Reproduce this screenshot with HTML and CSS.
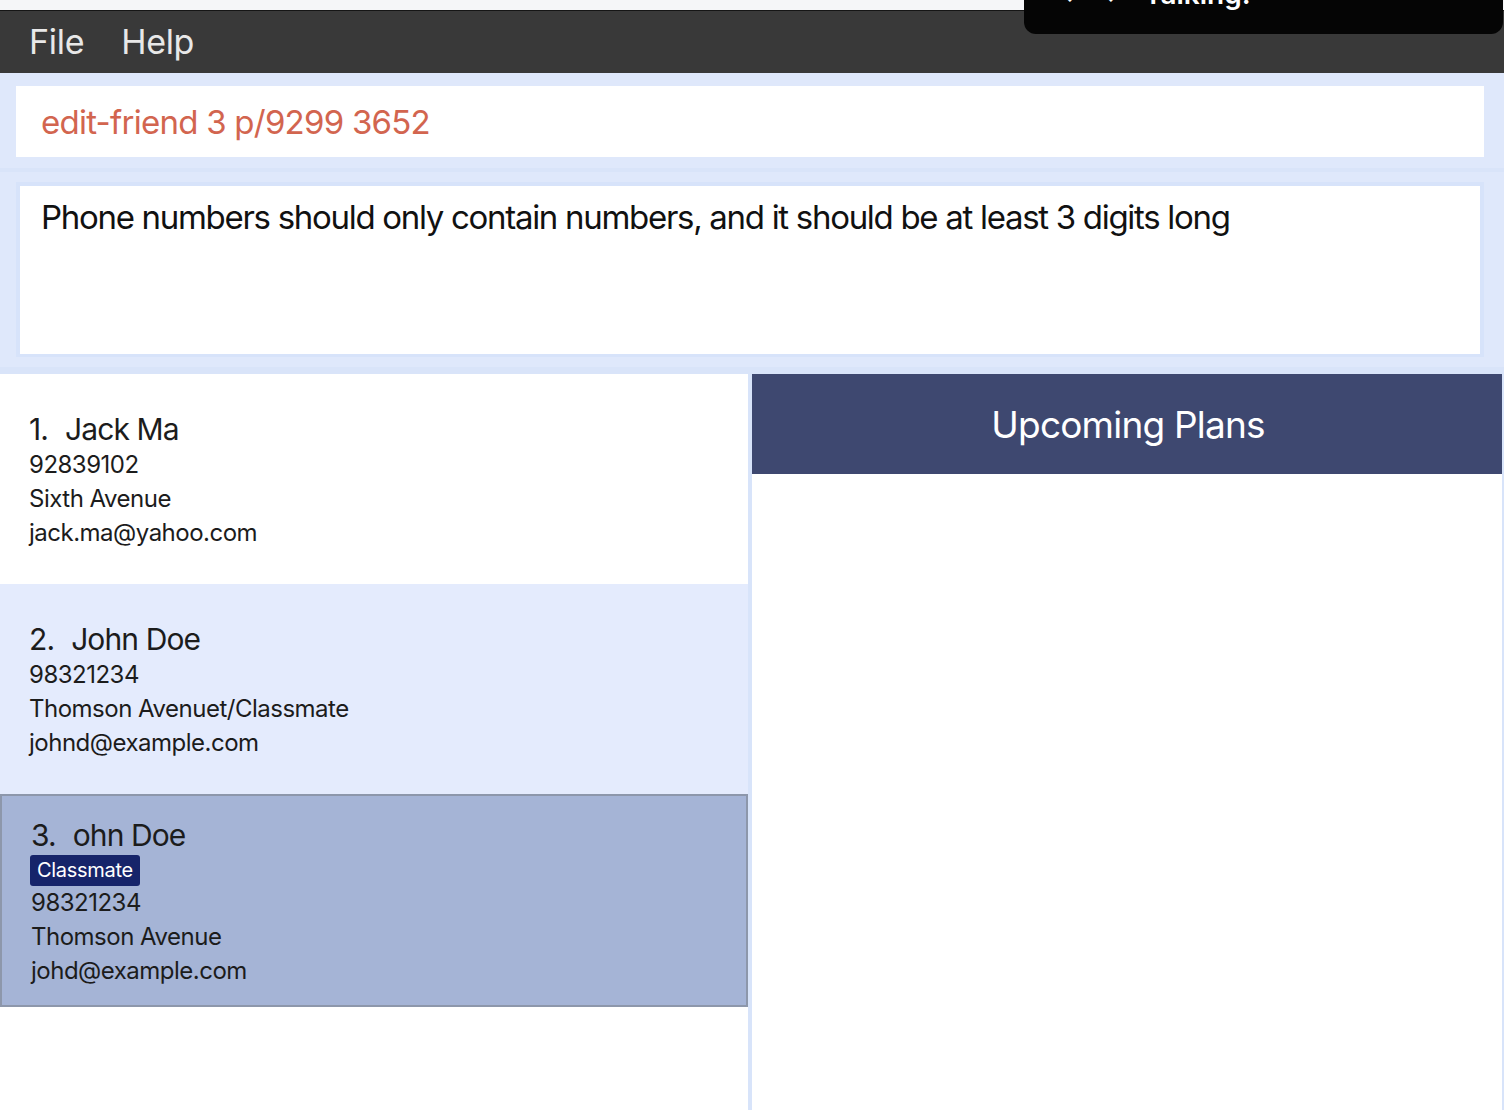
FILE: index.html
```html
<!DOCTYPE html>
<html>
<head>
<meta charset="utf-8">
<link rel="stylesheet" href="styles.css">
</head>
<body>
<div class="app">
  <div class="topstrip"></div>
  <div class="menubar">
    <span class="menu-item">File</span>
    <span class="menu-item">Help</span>
  </div>
  <div class="toast"><span class="toast-icons">&#10003; &#10003;</span><span class="toast-text">Talking:</span></div>
  <div class="upper">
    <div class="command-box">edit-friend 3 p/9299 3652</div>
    <div class="sep"></div>
    <div class="result-wrap">
      <div class="result-box">Phone numbers should only contain numbers, and it should be at least 3 digits long</div>
    </div>
    <div class="sep sep-bottom"></div>
  </div>
  <div class="panels">
    <div class="list">
      <div class="card">
        <div class="name"><span class="idx">1.</span>Jack Ma</div>
        <div class="line">92839102</div>
        <div class="line">Sixth Avenue</div>
        <div class="line">jack.ma@yahoo.com</div>
      </div>
      <div class="card card-alt">
        <div class="name"><span class="idx">2.</span>John Doe</div>
        <div class="line">98321234</div>
        <div class="line">Thomson Avenuet/Classmate</div>
        <div class="line">johnd@example.com</div>
      </div>
      <div class="card card-selected">
        <div class="name"><span class="idx">3.</span>ohn Doe</div>
        <div class="tags"><span class="tag">Classmate</span></div>
        <div class="line">98321234</div>
        <div class="line">Thomson Avenue</div>
        <div class="line">johd@example.com</div>
      </div>
    </div>
    <div class="divider"></div>
    <div class="plans">
      <div class="plans-header">Upcoming Plans</div>
      <div class="plans-body"></div>
    </div>
    <div class="edge"></div>
  </div>
</div>
</body>
</html>
```
FILE: styles.css
```css
html, body {
  margin: 0;
  padding: 0;
  height: 100%;
  overflow: hidden;
}
body {
  font-family: Inter, "Noto Sans", "Liberation Sans", sans-serif;
  background: #dfe8fb;
}
.app {
  position: relative;
  height: 1110px;
  display: flex;
  flex-direction: column;
}
.topstrip {
  height: 10px;
  background: #f5f6f8;
  border-bottom: 1px solid #151515;
}
.menubar {
  height: 62px;
  background: #393939;
  display: flex;
  align-items: center;
  padding-left: 29px;
  gap: 37px;
}
.menu-item {
  color: #e8e8e8;
  font-size: 34px;
  letter-spacing: -0.3px;
  line-height: 1;
}
.toast {
  position: absolute;
  left: 1024px;
  top: 0;
  width: 479px;
  height: 34px;
  background: #050505;
  border-radius: 0 0 12px 12px;
  overflow: hidden;
  color: #fff;
  font-weight: 600;
  font-size: 28px;
}
.toast-icons {
  position: absolute;
  left: 38px;
  top: -18px;
  font-size: 22px;
  letter-spacing: 8px;
}
.toast-text {
  position: absolute;
  left: 120px;
  top: -23px;
}
.upper {
  background: #dfe8fb;
  padding-top: 13px;
}
.command-box {
  margin: 0 20px 0 16px;
  height: 71px;
  background: #ffffff;
  color: #d2654f;
  font-size: 33px;
  letter-spacing: -0.75px;
  display: flex;
  align-items: center;
  padding-left: 25px;
}
.sep {
  height: 11px;
  border-bottom: 4px solid #d9e4f9;
}
.sep-bottom {
  height: 10px;
  border-bottom: 7px solid #d9e4f9;
}
.result-wrap {
  margin: 10px 20px 0 16px;
  border: 4px solid #d7e3fa;
  border-bottom-width: 3px;
}
.result-box {
  height: 168px;
  background: #ffffff;
  color: #111;
  font-size: 33px;
  letter-spacing: -1.3px;
  padding: 11px 0 0 21px;
  box-sizing: border-box;
  line-height: 40px;
}
.panels {
  flex: 1;
  display: flex;
  min-height: 0;
}
.list {
  width: 748px;
  background: #ffffff;
  display: flex;
  flex-direction: column;
}
.card {
  height: 210px;
  box-sizing: border-box;
  padding: 36px 0 0 29px;
  color: #1c1c1c;
  background: #ffffff;
}
.card-alt {
  background: #e4ebfd;
}
.card-selected {
  height: 213px;
  background: #a5b4d6;
  border: 2px solid #8d97ab;
  padding: 20px 0 0 29px;
}
.name {
  font-size: 30px;
  line-height: 38px;
  letter-spacing: -0.9px;
}
.idx {
  margin-right: 17px;
}
.line {
  font-size: 24px;
  line-height: 34px;
  letter-spacing: -0.5px;
}
.tags {
  margin-top: 1px;
  height: 31px;
  display: flex;
}
.tag {
  background: #16246a;
  color: #ffffff;
  font-size: 20px;
  line-height: 31px;
  padding: 0 7px;
  border-radius: 3px;
  margin-left: -1px;
  letter-spacing: -0.3px;
}
.divider {
  width: 4px;
  background: #d8e4fa;
}
.plans {
  width: 750px;
  background: #ffffff;
  display: flex;
  flex-direction: column;
}
.plans-header {
  height: 100px;
  background: #3e4870;
  color: #ffffff;
  font-size: 37px;
  letter-spacing: -0.8px;
  display: flex;
  align-items: center;
  justify-content: center;
  padding-left: 2px;
}
.plans-body {
  flex: 1;
}
.edge {
  width: 2px;
  background: #d8e4fa;
}
```
